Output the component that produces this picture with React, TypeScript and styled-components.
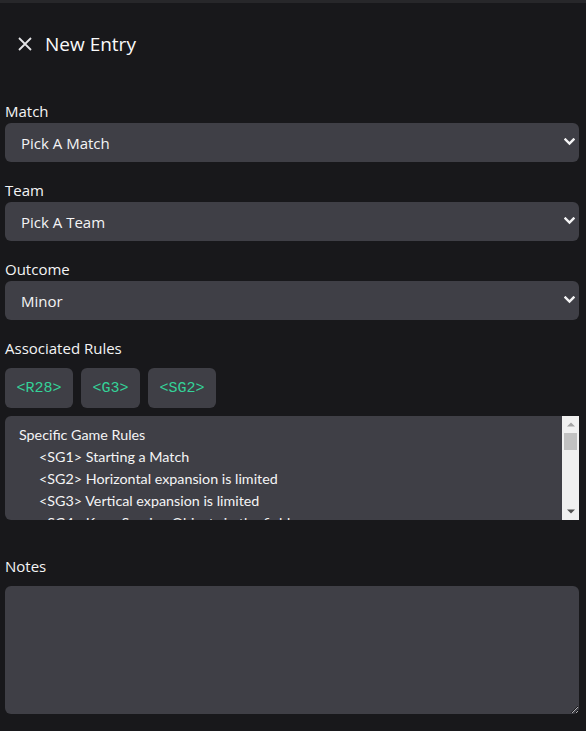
import React from "react";
import styled, { createGlobalStyle } from "styled-components";

const Global = createGlobalStyle`
  html, body { margin: 0; padding: 0; background: #18181b; }
  body { font-family: "Open Sans", "Noto Sans", sans-serif; color: #f4f4f5; font-size: 16px; }
  * { box-sizing: border-box; }
`;

const Page = styled.div`
  width: 586px;
  min-height: 731px;
  background: #18181b;
  border-top: 3px solid #27272a;
`;

const Header = styled.header`
  height: 82px;
  display: flex;
  align-items: center;
  gap: 13px;
  padding-left: 18px;
`;

const Title = styled.h1`
  margin: 0;
  font-size: 19px;
  font-weight: 400;
  color: #fafafa;
`;

const CloseButton = styled.button`
  width: 14px;
  height: 14px;
  padding: 0;
  border: 0;
  background: none;
  display: flex;
  color: #e4e4e7;
`;

const Form = styled.form`
  padding: 14px 7px 0 5px;
  display: flex;
  flex-direction: column;
`;

const Field = styled.div<{ $gap?: number }>`
  display: flex;
  flex-direction: column;
  margin-bottom: ${(p) => p.$gap ?? 16}px;
`;

const Label = styled.label<{ $mb?: number }>`
  line-height: 24px;
  font-size: 15px;
  color: #f4f4f5;
  margin-bottom: ${(p) => p.$mb ?? 0}px;
`;

const SelectWrap = styled.div`
  position: relative;
`;

const Select = styled.select`
  appearance: none;
  width: 100%;
  height: 39px;
  border: 0;
  border-radius: 6px;
  background: #3f3f46;
  color: #f4f4f5;
  font: inherit;
  font-size: 15px;
  padding: 0 16px;
  outline: none;
`;

const Chevron = styled.svg`
  position: absolute;
  right: 4px;
  top: 15px;
  pointer-events: none;
`;

const Chips = styled.div`
  display: flex;
  gap: 8px;
  margin-bottom: 8px;
`;

const Chip = styled.button`
  height: 40px;
  padding: 0 11.5px;
  border: 0;
  border-radius: 6px;
  background: #3f3f46;
  color: #34d399;
  font-family: "Liberation Mono", monospace;
  font-size: 15px;
`;

const RuleBox = styled.div`
  height: 104px;
  display: flex;
  margin-bottom: 34px;
`;

const RuleList = styled.div`
  flex: 1;
  overflow: hidden;
  background: #3f3f46;
  border-radius: 6px 0 0 6px;
  padding: 8px 14px;
  font-family: Lato, "Open Sans", sans-serif;
  font-size: 14.3px;
  line-height: 22px;
`;

const Scrollbar = styled.div`
  width: 17px;
  background: #f0f0f0;
  display: flex;
  flex-direction: column;
  align-items: center;
`;

const ScrollButton = styled.div`
  height: 17px;
  width: 17px;
  display: flex;
  align-items: center;
  justify-content: center;
`;

const Thumb = styled.div`
  width: 13px;
  height: 17px;
  background: #c1c1c1;
`;

const Track = styled.div`
  flex: 1;
`;

const Section = styled.div`
  color: #f4f4f5;
`;

const RuleLine = styled.div`
  padding-left: 20px;
  white-space: nowrap;
`;

const TextArea = styled.textarea`
  height: 128px;
  width: 100%;
  border: 0;
  border-radius: 6px;
  background: #3f3f46;
  color: #f4f4f5;
  font: inherit;
  padding: 8px 14px;
  outline: none;
  display: block;
`;

const Down = () => (
  <Chevron width="11" height="8" viewBox="0 0 11 8">
    <path d="M1.5 1.5 L5.5 5.5 L9.5 1.5" fill="none" stroke="#f4f4f5" strokeWidth="2.4" strokeLinecap="square" />
  </Chevron>
);

const SelectField = ({ label, value }: { label: string; value: string }) => (
  <Field>
    <Label>{label}</Label>
    <SelectWrap>
      <Select defaultValue={value}>
        <option>{value}</option>
      </Select>
      <Down />
    </SelectWrap>
  </Field>
);

const rules: [string, string[]][] = [
  [
    "Specific Game Rules",
    [
      "<SG1> Starting a Match",
      "<SG2> Horizontal expansion is limited",
      "<SG3> Vertical expansion is limited",
      "<SG4> Keep Scoring Objects in the field",
    ],
  ],
];

export default function App() {
  return (
    <>
      <Global />
      <Page>
        <Header>
          <CloseButton aria-label="Close">
            <svg width="14" height="14" viewBox="0 0 14 14">
              <path d="M1 1 L13 13 M13 1 L1 13" stroke="#e4e4e7" strokeWidth="1.8" />
            </svg>
          </CloseButton>
          <Title>New Entry</Title>
        </Header>
        <Form>
          <SelectField label="Match" value="Pick A Match" />
          <SelectField label="Team" value="Pick A Team" />
          <SelectField label="Outcome" value="Minor" />
          <Field $gap={0}>
            <Label $mb={8}>Associated Rules</Label>
            <Chips>
              <Chip type="button">&lt;R28&gt;</Chip>
              <Chip type="button">&lt;G3&gt;</Chip>
              <Chip type="button">&lt;SG2&gt;</Chip>
            </Chips>
            <RuleBox>
              <RuleList>
                {rules.map(([name, items]) => (
                  <Section key={name}>
                    {name}
                    {items.map((r) => (
                      <RuleLine key={r}>{r}</RuleLine>
                    ))}
                  </Section>
                ))}
              </RuleList>
              <Scrollbar>
                <ScrollButton>
                  <svg width="8" height="5" viewBox="0 0 8 5">
                    <polygon points="0,4.5 4,0.5 8,4.5" fill="#a3a3a3" />
                  </svg>
                </ScrollButton>
                <Thumb />
                <Track />
                <ScrollButton>
                  <svg width="8" height="5" viewBox="0 0 8 5">
                    <polygon points="0,0.5 8,0.5 4,4.5" fill="#505050" />
                  </svg>
                </ScrollButton>
              </Scrollbar>
            </RuleBox>
          </Field>
          <Field $gap={0}>
            <Label $mb={8}>Notes</Label>
            <TextArea />
          </Field>
        </Form>
      </Page>
    </>
  );
}
